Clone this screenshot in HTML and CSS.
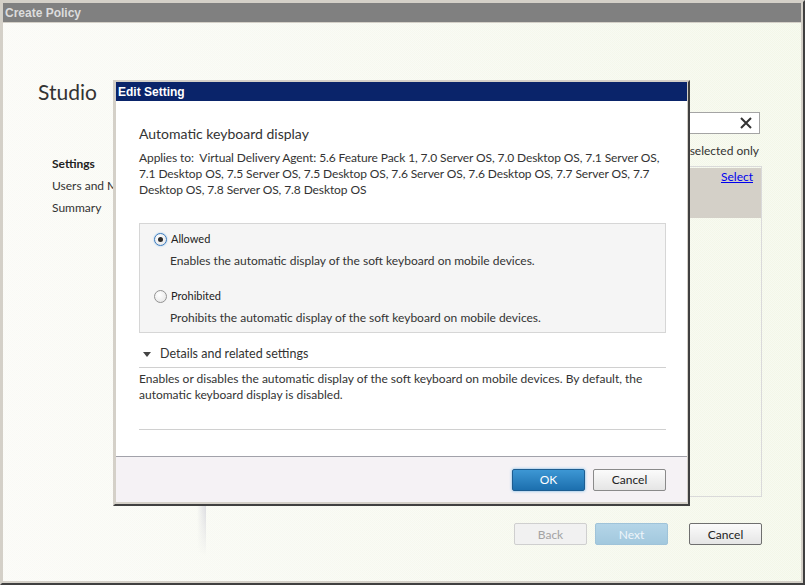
FILE: index.html
```html
<!DOCTYPE html>
<html lang="en">

<head>
  <meta charset="UTF-8">
  <title>Create Policy</title>
  <link rel="stylesheet" href="styles.css">
</head>

<body>
  <div class="window">
    <div class="titlebar">Create Policy</div>
    <div class="client">
      <div class="side">
        <h1 class="brand">Studio</h1>
        <ul class="steps">
          <li class="current">Settings</li>
          <li>Users and Machines</li>
          <li>Summary</li>
        </ul>
      </div>
      <div class="shade"></div>
      <div class="main">
        <div class="search">
          <svg class="clear" width="12" height="12" viewBox="0 0 12 12">
            <path d="M1 1 L11 11 M11 1 L1 11" stroke="#333" stroke-width="2" fill="none" />
          </svg>
        </div>
        <div class="filter"><span class="check"></span>Show selected only</div>
        <div class="list">
          <div class="list-row"><a href="#">Select</a></div>
        </div>
        <div class="wizard-buttons">
          <button class="btn" disabled>Back</button>
          <button class="btn btn-next" disabled>Next</button>
          <button class="btn btn-cancel">Cancel</button>
        </div>
      </div>
    </div>
  </div>

  <div class="dialog">
    <div class="dialog-title">Edit Setting</div>
    <div class="dialog-body">
      <h2 class="setting-name">Automatic keyboard display</h2>
      <p class="applies">Applies to:&nbsp; Virtual Delivery Agent: 5.6 Feature Pack 1, 7.0 Server OS, 7.0 Desktop OS, 7.1 Server OS,<br>
        7.1 Desktop OS, 7.5 Server OS, 7.5 Desktop OS, 7.6 Server OS, 7.6 Desktop OS, 7.7 Server OS, 7.7<br>
        Desktop OS, 7.8 Server OS, 7.8 Desktop OS</p>

      <div class="options">
        <div class="option">
          <div class="option-head"><span class="radio checked"></span>Allowed</div>
          <div class="option-desc">Enables the automatic display of the soft keyboard on mobile devices.</div>
        </div>
        <div class="option">
          <div class="option-head"><span class="radio"></span>Prohibited</div>
          <div class="option-desc">Prohibits the automatic display of the soft keyboard on mobile devices.</div>
        </div>
      </div>

      <div class="details-head">
        <svg class="caret" width="8" height="5" viewBox="0 0 8 5">
          <path d="M0 0 H8 L4 5 Z" fill="#444" />
        </svg>
        Details and related settings
      </div>
      <p class="details-text">Enables or disables the automatic display of the soft keyboard on mobile devices. By default, the<br>
        automatic keyboard display is disabled.</p>
    </div>
    <div class="dialog-footer">
      <button class="btn btn-ok">OK</button>
      <button class="btn btn-cancel">Cancel</button>
    </div>
  </div>
</body>

</html>
```

FILE: styles.css
```css
body {
  margin: 0;
  font-family: "Lato", "Noto Sans", sans-serif;
  font-size: 12px;
  color: #333;
}

.window {
  width: 805px;
  height: 585px;
  box-sizing: border-box;
  display: flex;
  flex-direction: column;
  border: 2px solid;
  border-color: #d4d0c8 #404040 #404040 #d4d0c8;
  padding: 1px 2px 2px 1px;
  background: #d4d0c8;
}

.titlebar {
  height: 19px;
  box-sizing: border-box;
  padding: 2px 0 0 2px;
  line-height: 16px;
  background: #808080;
  color: #dcdcdc;
  font-family: "Liberation Sans", Arial, sans-serif;
  font-weight: bold;
  font-size: 12px;
}

.client {
  flex: 1;
  display: flex;
  margin-top: 1px;
  background:
    repeating-conic-gradient(rgba(255, 255, 255, 0.35) 0 25%, transparent 0 50%) 0 0 / 2px 2px,
    linear-gradient(to right, #fafaf6, #f3f7e8);
}

.side {
  width: 159px;
  padding-left: 35px;
  flex-shrink: 0;
}

.brand {
  margin: 57px 0 0;
  font-size: 21px;
  line-height: 24px;
  font-weight: normal;
  color: #333;
}

/* the dialog sits over the rest of the step names */
.steps {
  list-style: none;
  width: 61px;
  overflow: hidden;
  margin: 49px 0 0 14px;
  padding: 0;
  white-space: nowrap;
}

.steps li {
  line-height: 22px;
  color: #333;
}

.steps li.current {
  font-weight: bold;
  color: #222;
}

.shade {
  width: 9px;
  height: 400px;
  margin-top: 133px;
  flex-shrink: 0;
  background: linear-gradient(to right, rgba(215, 215, 225, 0), rgba(205, 205, 215, 0.8));
  -webkit-mask-image: linear-gradient(to bottom, #000 85%, transparent);
  mask-image: linear-gradient(to bottom, #000 85%, transparent);
}

.main {
  flex: 1;
  display: flex;
  flex-direction: column;
  padding-right: 39px;
}

.search {
  align-self: flex-end;
  width: 300px;
  height: 22px;
  margin: 89px 2px 0 0;
  box-sizing: border-box;
  border: 1px solid #a4a4a4;
  background: #fff;
  display: flex;
  align-items: center;
  justify-content: flex-end;
  padding-right: 7px;
}

.filter {
  align-self: flex-end;
  margin: 9px 3px 0 0;
  line-height: 16px;
  display: flex;
  align-items: center;
  gap: 5px;
}

.check {
  width: 11px;
  height: 11px;
  border: 1px solid #888;
  background: #fff;
}

.list {
  flex: 1;
  margin-top: 7px;
  border: 1px solid #dadada;
  padding-top: 1px;
}

.list-row {
  height: 50px;
  background: #d4d0c8;
  text-align: right;
  padding: 1px 8px 0 0;
  line-height: 16px;
  box-sizing: border-box;
}

.list-row a {
  color: #0000ee;
}

.wizard-buttons {
  display: flex;
  justify-content: flex-end;
  gap: 8px;
  margin: 26px 0 36px 0;
}

.btn {
  width: 73px;
  height: 22px;
  box-sizing: border-box;
  border-radius: 2px;
  border: 1px solid #8a8a8a;
  background: linear-gradient(#fbfbfb, #e5e5e5);
  font-family: "Lato", "Noto Sans", sans-serif;
  font-size: 12px;
  color: #222;
  padding: 0;
}

.btn:disabled {
  border-color: #cfcfcf;
  background: #f1f1f1;
  color: #a3a3a3;
}

.btn.btn-next:disabled {
  border-color: #9fc3d9;
  background: linear-gradient(#b4d5e8, #a2c8de);
  color: #eef5fa;
}

.wizard-buttons .btn-cancel {
  margin-left: 13px;
  border-color: #6f6f6f;
}

/* modal */
.dialog {
  position: absolute;
  left: 113px;
  top: 80px;
  width: 577px;
  height: 426px;
  box-sizing: border-box;
  display: flex;
  flex-direction: column;
  border: 2px solid;
  border-color: #d4d0c8 #404040 #404040 #d4d0c8;
  padding: 0 1px 2px 1px;
  background: #d4d0c8;
}

.dialog-title {
  height: 19px;
  box-sizing: border-box;
  padding: 2px 0 0 2px;
  line-height: 17px;
  background: #0a246a;
  color: #fff;
  font-family: "Liberation Sans", Arial, sans-serif;
  font-weight: bold;
  font-size: 12px;
}

.dialog-body {
  flex: 1;
  background: #fff;
  border-bottom: 1px solid #a2a2aa;
  padding: 23px 21px 0 23px;
}

.setting-name {
  margin: 0;
  font-size: 14px;
  line-height: 20px;
  font-weight: normal;
  color: #333;
}

.applies {
  margin: 6px 0 0;
  line-height: 16px;
  letter-spacing: -0.1px;
  white-space: nowrap;
}

.options {
  margin-top: 25px;
  border: 1px solid #d6d6d6;
  background: #f5f5f5;
  padding: 7px 14px 6px;
}

.option + .option {
  margin-top: 19px;
}

.option-head {
  display: flex;
  align-items: center;
  line-height: 16px;
  font-size: 11px;
  color: #222;
}

.radio {
  width: 13px;
  height: 13px;
  box-sizing: border-box;
  border-radius: 50%;
  border: 1px solid #929292;
  background: radial-gradient(circle at 40% 35%, #fff, #e2e2e2);
  margin-right: 4px;
  display: flex;
  align-items: center;
  justify-content: center;
}

.radio.checked {
  border-color: #3b7bbf;
  box-shadow: 0 0 2px #8cc0ea;
}

.radio.checked::after {
  content: "";
  width: 5px;
  height: 5px;
  border-radius: 50%;
  background: #2b2b2b;
}

.option-desc {
  margin: 6px 0 0 16px;
  line-height: 16px;
}

.details-head {
  margin-top: 13px;
  padding: 0 0 5px 4px;
  line-height: 16px;
  font-size: 12.5px;
  border-bottom: 1px solid #d0d0d0;
  display: flex;
  align-items: center;
  gap: 9px;
}

.details-text {
  margin: 3px 0 0;
  padding-bottom: 26px;
  line-height: 16px;
  border-bottom: 1px solid #d0d0d0;
  white-space: nowrap;
}

.dialog-footer {
  height: 45px;
  background: #f5f2f5;
  display: flex;
  justify-content: flex-end;
  align-items: center;
  gap: 8px;
  padding-right: 21px;
}

.btn.btn-ok {
  border-color: #1d5d91;
  background: linear-gradient(#3d97d4, #1c6fae);
  color: #fff;
  box-shadow: 0 0 3px #6db3e6;
}
```
